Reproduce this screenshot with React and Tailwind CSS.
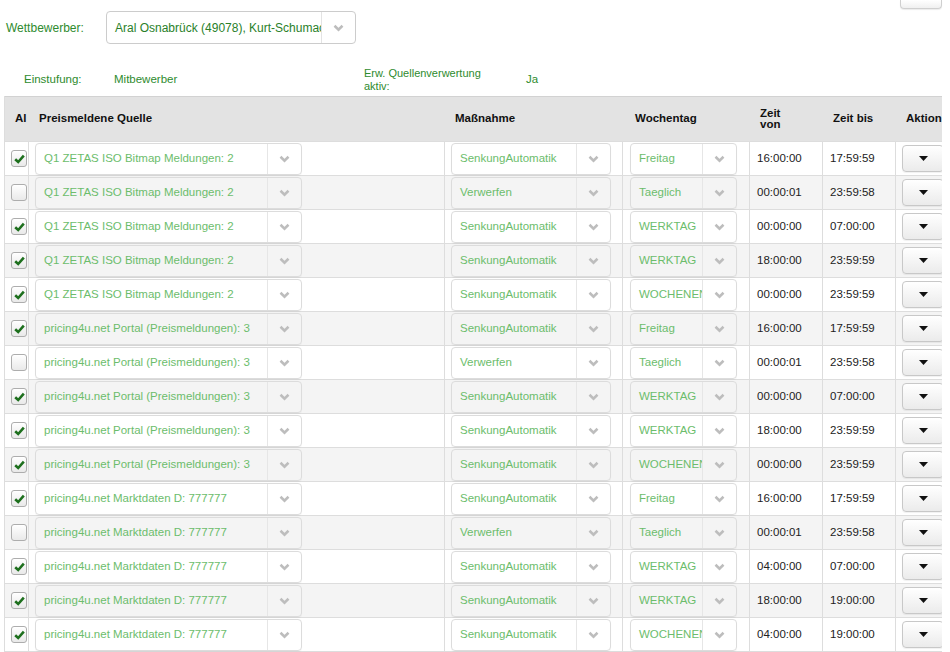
import React from 'react';

const SOURCES = [
    'Q1 ZETAS ISO Bitmap Meldungen: 2',
    'pricing4u.net Portal (Preismeldungen): 3',
    'pricing4u.net Marktdaten D: 777777',
];

const PATTERNS = [
    [
        { on: true, action: 'SenkungAutomatik', day: 'Freitag', from: '16:00:00', to: '17:59:59' },
        { on: false, action: 'Verwerfen', day: 'Taeglich', from: '00:00:01', to: '23:59:58' },
        { on: true, action: 'SenkungAutomatik', day: 'WERKTAG', from: '00:00:00', to: '07:00:00' },
        { on: true, action: 'SenkungAutomatik', day: 'WERKTAG', from: '18:00:00', to: '23:59:59' },
        { on: true, action: 'SenkungAutomatik', day: 'WOCHENENDE', from: '00:00:00', to: '23:59:59' },
    ],
    [
        { on: true, action: 'SenkungAutomatik', day: 'Freitag', from: '16:00:00', to: '17:59:59' },
        { on: false, action: 'Verwerfen', day: 'Taeglich', from: '00:00:01', to: '23:59:58' },
        { on: true, action: 'SenkungAutomatik', day: 'WERKTAG', from: '04:00:00', to: '07:00:00' },
        { on: true, action: 'SenkungAutomatik', day: 'WERKTAG', from: '18:00:00', to: '19:00:00' },
        { on: true, action: 'SenkungAutomatik', day: 'WOCHENENDE', from: '04:00:00', to: '19:00:00' },
    ],
];

const ROWS = [
    ...PATTERNS[0].map(r => ({ ...r, source: SOURCES[0] })),
    ...PATTERNS[0].map(r => ({ ...r, source: SOURCES[1] })),
    ...PATTERNS[1].map(r => ({ ...r, source: SOURCES[2] })),
];

const COLS = 'grid grid-cols-[24px_416px_178px_127px_73px_73px_80px]';

function Chevron() {
    return (
        <svg width="11" height="8" viewBox="0 0 11 8">
            <polyline points="1.5,1.8 5.5,5.6 9.5,1.8" fill="none" stroke="#bdbdbd" strokeWidth="2.6" />
        </svg>
    );
}

function Select({ value, width }) {
    return (
        <div className={`flex h-[32px] rounded-[4px] border border-[#dcdcdc] shadow-[0_1px_1px_rgba(0,0,0,0.04)] ${width}`}>
            <div className="flex-1 min-w-0 flex items-center pl-[8px] pr-[6px] overflow-hidden whitespace-nowrap text-[#6cbd6c]">
                {value}
            </div>
            <div className="w-[34px] border-l border-[#e6e6e6] flex items-center justify-center">
                <Chevron />
            </div>
        </div>
    );
}

function Checkbox({ on }) {
    return (
        <div className="w-[16px] h-[17px] rounded-[3px] border border-[#adadad] bg-gradient-to-b from-white to-[#e9e9e9] flex items-center justify-center shadow-[inset_0_1px_0_#fff]">
            {on && (
                <svg width="11" height="10" viewBox="0 0 11 10">
                    <path d="M1.2 5.2 L4.2 8 L9.8 1.6" fill="none" stroke="#1d6f1d" strokeWidth="2.6" />
                </svg>
            )}
        </div>
    );
}

export default function App() {
    return (
        <div className="w-[950px] h-[652px] bg-white overflow-hidden font-['Liberation_Sans',Arial,sans-serif]">
            {/* Werkzeugknopf oben rechts */}
            <div className="flex justify-end pr-[8px] h-[9px]">
                <div className="w-[42px] h-[9px] border border-t-0 border-[#cfcfcf] rounded-b-[4px] bg-gradient-to-b from-white to-[#f0f0f0] shadow-[0_1px_1px_rgba(0,0,0,0.08)]"></div>
            </div>

            <div className="flex items-center mt-[2px] pl-[6px] h-[33px] text-[12px]">
                <div className="w-[100px] text-[#2e8b2e]">Wettbewerber:</div>
                <div className="flex h-[33px] w-[250px] rounded-[4px] border border-[#cccccc]">
                    <div className="flex-1 min-w-0 flex items-center pl-[8px] pr-[5px] overflow-hidden whitespace-nowrap text-[#2a7f2a]">
                        Aral Osnabrück (49078), Kurt-Schumacher-Str. 1
                    </div>
                    <div className="w-[34px] border-l border-[#e3e3e3] flex items-center justify-center">
                        <Chevron />
                    </div>
                </div>
            </div>

            <div className="flex items-center h-[52px] pt-[20px] pl-[24px] text-[11.5px] text-[#2e8b2e]">
                <div className="w-[90px]">Einstufung:</div>
                <div className="w-[250px]">Mitbewerber</div>
                <div className="w-[162px]">
                    <div className="w-[130px] text-[11px] leading-[13px]">Erw. Quellenverwertung aktiv:</div>
                </div>
                <div>Ja</div>
            </div>

            <div className="ml-[4px] w-[938px] overflow-hidden border-l border-[#dddddd] text-[11.5px] text-[#222]">
                <div className={`${COLS} h-[45px] bg-[#e3e3e3] border-t border-[#d2d2d2] font-bold text-[#111]`}>
                    <div className="flex items-center pl-[10px] overflow-hidden whitespace-nowrap">Al</div>
                    <div className="flex items-center pl-[10px]">Preismeldene Quelle</div>
                    <div className="flex items-center pl-[10px]">Maßnahme</div>
                    <div className="flex items-center pl-[12px]">Wochentag</div>
                    <div className="flex items-center pl-[10px]">
                        <div className="text-center leading-[11px]">Zeit<br />von</div>
                    </div>
                    <div className="flex items-center pl-[10px]">Zeit bis</div>
                    <div className="flex items-center pl-[10px]">Aktion</div>
                </div>

                {ROWS.map((r, idx) => (
                    <div key={idx} className={`${COLS} h-[34px] border-t border-[#dddddd] ${idx % 2 === 1 ? 'bg-[#f4f4f4]' : 'bg-white'}`}>
                        <div className="flex items-center pl-[6px] border-r border-[#dddddd]">
                            <Checkbox on={r.on} />
                        </div>
                        <div className="flex items-center pl-[6px] border-r border-[#dddddd]">
                            <Select value={r.source} width="w-[267px]" />
                        </div>
                        <div className="flex items-center pl-[6px] border-r border-[#dddddd]">
                            <Select value={r.action} width="w-[160px]" />
                        </div>
                        <div className="flex items-center pl-[7px] border-r border-[#dddddd]">
                            <Select value={r.day} width="w-[107px]" />
                        </div>
                        <div className="flex items-center pl-[7px] border-r border-[#dddddd]">{r.from}</div>
                        <div className="flex items-center pl-[7px] border-r border-[#dddddd]">{r.to}</div>
                        <div className="flex items-center pl-[6px]">
                            <div className="w-[42px] h-[27px] rounded-[4px] border border-[#c8c8c8] bg-gradient-to-b from-white to-[#ebebeb] flex items-center justify-center shadow-[0_1px_1px_rgba(0,0,0,0.06)]">
                                <svg width="9" height="5" viewBox="0 0 9 5">
                                    <polygon points="0,0 9,0 4.5,5" fill="#111" />
                                </svg>
                            </div>
                        </div>
                    </div>
                ))}
                <div className="border-t border-[#dddddd]"></div>
            </div>
        </div>
    );
}
